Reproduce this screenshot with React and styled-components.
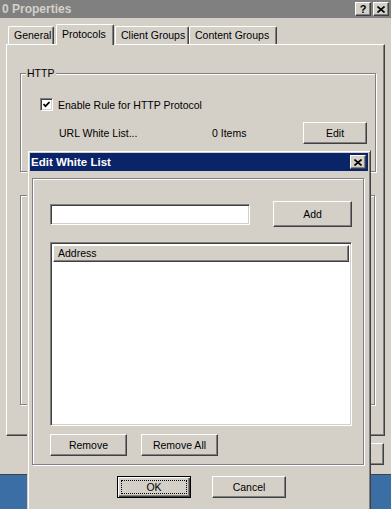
import styled, { createGlobalStyle } from "styled-components";

const GlobalStyle = createGlobalStyle`
  html, body { margin: 0; padding: 0; }
  body {
    font-family: "Liberation Sans", Arial, sans-serif;
    font-size: 10.5px;
    color: #000;
  }
`;

const Desktop = styled.div`
  position: relative;
  width: 391px;
  height: 509px;
  overflow: hidden;
  background: #3a6ea5;
`;

const Window = styled.div`
  display: flex;
  flex-direction: column;
  height: 474px;
  background: #d4d0c8;
  border-bottom: 1px solid #404040;
`;

const TitleBar = styled.div`
  display: flex;
  align-items: center;
  justify-content: space-between;
  height: ${(p) => p.$h || 18}px;
  padding: 0 2px 0 ${(p) => p.$pl || 2}px;
  background: ${(p) => (p.$active ? "#0a246a" : "#808080")};
  color: ${(p) => (p.$active ? "#ffffff" : "#d4d0c8")};
  font-weight: bold;
  font-size: ${(p) => p.$size || 12}px;
  white-space: nowrap;
`;

const CaptionButtons = styled.div`
  display: flex;
  gap: 2px;
`;

const CaptionButton = styled.div`
  display: flex;
  align-items: center;
  justify-content: center;
  box-sizing: border-box;
  width: 16px;
  height: 14px;
  background: #d4d0c8;
  border: 1px solid;
  border-color: #ffffff #404040 #404040 #ffffff;
  box-shadow: inset -1px -1px #808080;
  color: #000;
  font-size: 11px;
  font-weight: bold;
  line-height: 1;
`;

const Body = styled.div`
  display: flex;
  flex-direction: column;
  padding: 6px 6px 0 6px;
`;

const TabRow = styled.div`
  display: flex;
  align-items: flex-end;
  height: 20px;
`;

const Tab = styled.div`
  box-sizing: border-box;
  width: ${(p) => p.$w}px;
  height: ${(p) => (p.$active ? 21 : 18)}px;
  margin-left: ${(p) => p.$ml || 0}px;
  margin-bottom: ${(p) => (p.$active ? -1 : 0)}px;
  position: relative;
  z-index: ${(p) => (p.$active ? 1 : 0)};
  padding: ${(p) => (p.$active ? "3px 0 0 5px" : "2px 0 0 5px")};
  background: #d4d0c8;
  border-top: 1px solid #ffffff;
  border-left: 1px solid #ffffff;
  border-right: 1px solid #404040;
  border-radius: 2px 2px 0 0;
  box-shadow: inset -1px 0 #808080;
  white-space: nowrap;
`;

const Panel = styled.div`
  display: flex;
  flex-direction: column;
  box-sizing: border-box;
  height: 392px;
  padding: 28px 8px 0 13px;
  border: 1px solid;
  border-color: #ffffff #404040 #404040 #ffffff;
  box-shadow: inset -1px -1px #808080;
`;

const GroupBox = styled.div`
  position: relative;
  box-sizing: border-box;
  height: ${(p) => p.$h}px;
  margin-top: ${(p) => p.$mt || 0}px;
  margin-right: ${(p) => p.$mr || 0}px;
  padding: ${(p) => p.$pad || "0"};
  border: 1px solid #808080;
  box-shadow: inset 1px 1px #ffffff, 1px 1px #ffffff;
`;

const Legend = styled.span`
  position: absolute;
  top: -7px;
  left: 5px;
  padding: 0 2px 0 1px;
  background: #d4d0c8;
  line-height: 12px;
`;

const CheckRow = styled.div`
  display: flex;
  align-items: center;
  gap: 5px;
  height: 13px;
`;

const CheckBox = styled.div`
  display: flex;
  align-items: center;
  justify-content: center;
  box-sizing: border-box;
  width: 13px;
  height: 13px;
  background: #ffffff;
  border: 1px solid;
  border-color: #808080 #ffffff #ffffff #808080;
  box-shadow: inset 1px 1px #404040, inset -1px -1px #d4d0c8;
`;

const InfoRow = styled.div`
  display: flex;
  align-items: center;
  height: 22px;
  margin-top: 11px;
  padding-left: 19px;
`;

const Cell = styled.span`
  width: ${(p) => p.$w}px;
  white-space: nowrap;
`;

const Button = styled.button`
  display: flex;
  align-items: center;
  justify-content: center;
  box-sizing: border-box;
  width: ${(p) => p.$w}px;
  height: ${(p) => p.$h || 22}px;
  padding: 0;
  margin: 0;
  font: inherit;
  color: #000;
  background: #d4d0c8;
  border: 1px solid;
  border-color: #ffffff #404040 #404040 #ffffff;
  box-shadow: inset -1px -1px #808080;
  flex-shrink: 0;
`;

const DefaultButton = styled(Button)`
  padding: 3px;
  border: 1px solid #000;
  box-shadow: inset 1px 1px #ffffff, inset -1px -1px #404040,
    inset -2px -2px #808080;
`;

const FocusRing = styled.span`
  display: flex;
  align-items: center;
  justify-content: center;
  align-self: stretch;
  flex: 1;
  border: 1px dotted #000;
`;

const Footer = styled.div`
  display: flex;
  justify-content: flex-end;
  margin-top: 7px;
  padding-right: 1px;
`;

const Dialog = styled.div`
  position: absolute;
  left: 27px;
  top: 150px;
  box-sizing: border-box;
  width: 344px;
  height: 372px;
  padding: 2px;
  display: flex;
  flex-direction: column;
  background: #d4d0c8;
  border: 1px solid;
  border-color: #d4d0c8 #404040 #404040 #d4d0c8;
  box-shadow: inset 1px 1px #ffffff, inset -1px -1px #808080;
`;

const Frame = styled.div`
  box-sizing: border-box;
  height: 287px;
  margin: 7px 4px 0 2px;
  padding: 22px 0 0 17px;
  display: flex;
  flex-direction: column;
  border: 1px solid #808080;
  box-shadow: inset 1px 1px #ffffff, 1px 1px #ffffff;
`;

const EntryRow = styled.div`
  display: flex;
  align-items: center;
  gap: 23px;
`;

const TextInput = styled.input`
  box-sizing: border-box;
  width: 200px;
  height: 21px;
  margin: 0;
  padding: 2px 3px;
  font: inherit;
  background: #ffffff;
  border: 1px solid;
  border-color: #808080 #ffffff #ffffff #808080;
  box-shadow: inset 1px 1px #404040, inset -1px -1px #d4d0c8;
  outline: none;
`;

const ListView = styled.div`
  box-sizing: border-box;
  width: 302px;
  height: 184px;
  margin-top: 15px;
  padding: 2px;
  background: #ffffff;
  border: 1px solid;
  border-color: #808080 #ffffff #ffffff #808080;
  box-shadow: inset 1px 1px #404040, inset -1px -1px #d4d0c8;
`;

const ListHeader = styled.div`
  box-sizing: border-box;
  height: 17px;
  padding: 1px 0 0 4px;
  background: #d4d0c8;
  border: 1px solid;
  border-color: #ffffff #404040 #404040 #ffffff;
  box-shadow: inset -1px -1px #808080;
  line-height: 13px;
`;

const ActionRow = styled.div`
  display: flex;
  gap: 14px;
  margin-top: 8px;
`;

const DialogFooter = styled.div`
  display: flex;
  gap: 21px;
  margin-top: 11px;
  padding-left: 87px;
`;

const CloseGlyph = () => (
  <svg width="8" height="7" viewBox="0 0 8 7">
    <path d="M0.5 0.5 L7.5 6.5 M7.5 0.5 L0.5 6.5" stroke="#000" strokeWidth="1.6" />
  </svg>
);

const CheckGlyph = () => (
  <svg width="7" height="7" viewBox="0 0 7 7">
    <polyline points="0.5,3 2.5,5.2 6.5,1" fill="none" stroke="#000" strokeWidth="1.7" />
  </svg>
);

const App = () => {
  return (
    <Desktop>
      <GlobalStyle />
      <Window>
        <TitleBar>
          <span>0 Properties</span>
          <CaptionButtons>
            <CaptionButton>?</CaptionButton>
            <CaptionButton>
              <CloseGlyph />
            </CaptionButton>
          </CaptionButtons>
        </TitleBar>
        <Body>
          <TabRow>
            <Tab $w={46} $ml={2}>General</Tab>
            <Tab $w={58} $ml={2} $active>Protocols</Tab>
            <Tab $w={74} $ml={1}>Client Groups</Tab>
            <Tab $w={88}>Content Groups</Tab>
          </TabRow>
          <Panel>
            <GroupBox $h={99} $mr={0} $pad="24px 0 0 19px">
              <Legend>HTTP</Legend>
              <CheckRow>
                <CheckBox>
                  <CheckGlyph />
                </CheckBox>
                <span>Enable Rule for HTTP Protocol</span>
              </CheckRow>
              <InfoRow>
                <Cell $w={153}>URL White List...</Cell>
                <Cell $w={91}>0 Items</Cell>
                <Button $w={64}>Edit</Button>
              </InfoRow>
            </GroupBox>
            <GroupBox $h={210} $mt={23} $mr={1} />
          </Panel>
          <Footer>
            <Button $w={75} aria-label="Apply" />
          </Footer>
        </Body>
      </Window>

      <Dialog>
        <TitleBar $active $size={11.5} $pl={1}>
          <span>Edit White List</span>
          <CaptionButton>
            <CloseGlyph />
          </CaptionButton>
        </TitleBar>
        <Frame>
          <EntryRow>
            <TextInput defaultValue="" />
            <Button $w={79} $h={26}>Add</Button>
          </EntryRow>
          <ListView>
            <ListHeader>Address</ListHeader>
          </ListView>
          <ActionRow>
            <Button $w={77}>Remove</Button>
            <Button $w={77}>Remove All</Button>
          </ActionRow>
        </Frame>
        <DialogFooter>
          <DefaultButton $w={74}>
            <FocusRing>OK</FocusRing>
          </DefaultButton>
          <Button $w={74}>Cancel</Button>
        </DialogFooter>
      </Dialog>
    </Desktop>
  );
};

export default App;
